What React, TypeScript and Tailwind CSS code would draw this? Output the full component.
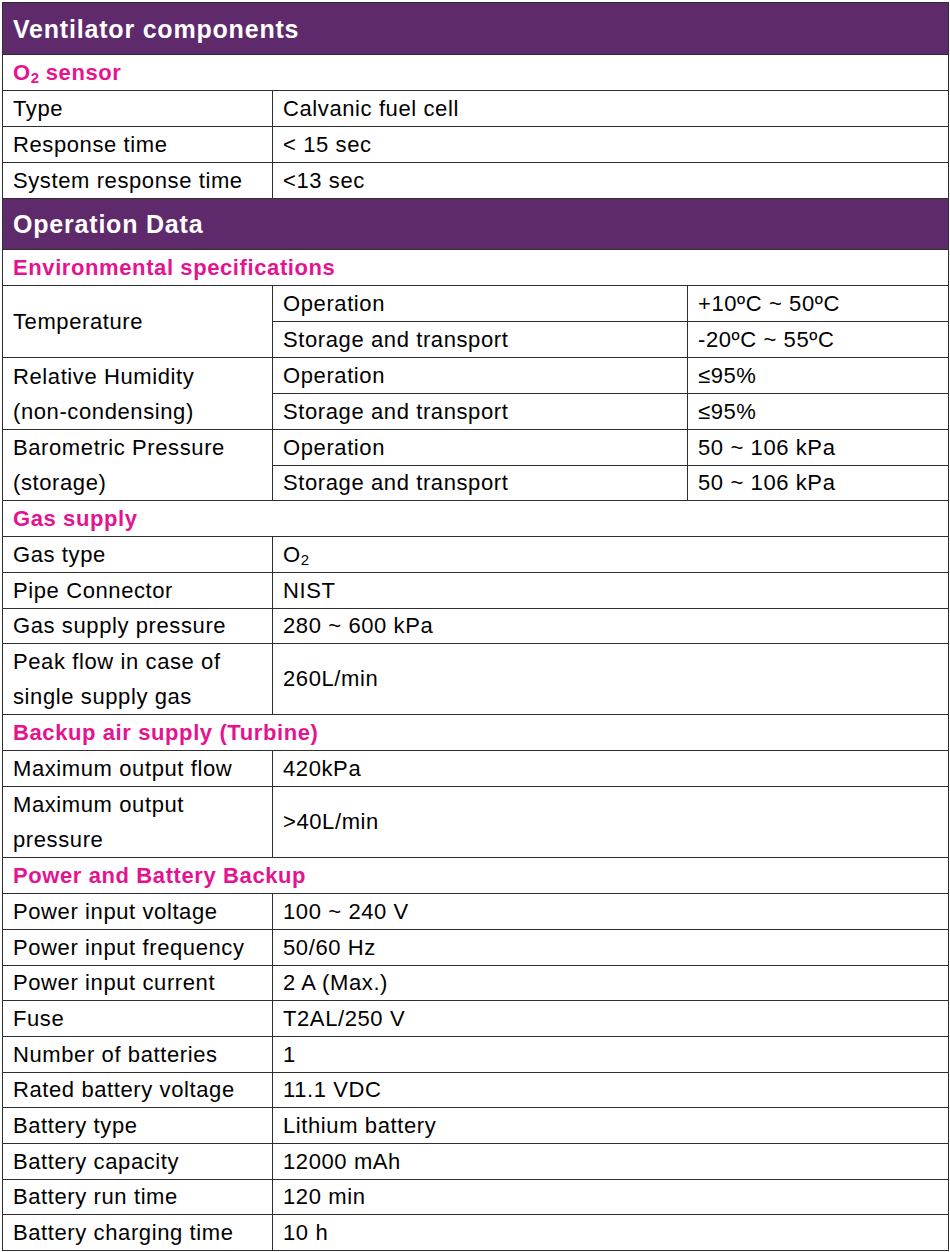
import React from "react";

const F = { fontFamily: '"Liberation Sans", Arial, sans-serif' };

function Sub2() {
  return <span className="text-[15px] leading-none relative top-[3px] tracking-normal">2</span>;
}

const td = "border border-[#2e2e2e] pl-[10px] pr-[6px] py-0 align-middle";

function Header({ children, h }: { children: React.ReactNode; h: string }) {
  return (
    <tr className={h}>
      <td colSpan={3} className={`${td} bg-[#5e2a6c] text-white font-bold text-[25px] tracking-[0.8px]`}>
        {children}
      </td>
    </tr>
  );
}

function Section({ children }: { children: React.ReactNode }) {
  return (
    <tr className="h-[36px]">
      <td colSpan={3} className={`${td} text-[#e5138f] font-bold text-[22px]`}>
        {children}
      </td>
    </tr>
  );
}

function Row2({ a, b, h = "h-[36px]", two }: { a: React.ReactNode; b: React.ReactNode; h?: string; two?: boolean }) {
  return (
    <tr className={h}>
      <td className={two ? `${td} leading-[35px]` : td}>{a}</td>
      <td colSpan={2} className={td}>{b}</td>
    </tr>
  );
}

function Row3({ c2, c3, h = "h-[36px]", first }: { c2: string; c3: string; h?: string; first?: React.ReactNode }) {
  return (
    <tr className={h}>
      {first !== undefined && (
        <td rowSpan={2} className={`${td} leading-[35px]`}>{first}</td>
      )}
      <td className={td}>{c2}</td>
      <td className={td}>{c3}</td>
    </tr>
  );
}

export default function App() {
  return (
    <div className="bg-white w-[950px] h-[1252px] pt-[2px] pl-[2px]" style={F}>
      <table className="border-collapse table-fixed w-[946px] text-[22px] tracking-[0.6px] text-black leading-[30px]">
        <colgroup>
          <col className="w-[270px]" />
          <col className="w-[415px]" />
          <col className="w-[261px]" />
        </colgroup>
        <tbody>
          <Header h="h-[52px]">Ventilator components</Header>
          <Section>O<Sub2 /> sensor</Section>
          <Row2 a="Type" b="Calvanic fuel cell" />
          <Row2 a="Response time" b="< 15 sec" />
          <Row2 a="System response time" b="<13 sec" />
          <Header h="h-[51px]">Operation Data</Header>
          <Section>Environmental specifications</Section>
          <Row3 first="Temperature" c2="Operation" c3="+10ºC ~ 50ºC" />
          <Row3 c2="Storage and transport" c3="-20ºC ~ 55ºC" />
          <Row3 first={<>Relative Humidity<br />(non-condensing)</>} c2="Operation" c3="≤95%" />
          <Row3 c2="Storage and transport" c3="≤95%" />
          <Row3 first={<>Barometric Pressure<br />(storage)</>} c2="Operation" c3="50 ~ 106 kPa" />
          <Row3 c2="Storage and transport" c3="50 ~ 106 kPa" h="h-[35px]" />
          <Section>Gas supply</Section>
          <Row2 a="Gas type" b={<>O<Sub2 /></>} />
          <Row2 a="Pipe Connector" b="NIST" />
          <Row2 a="Gas supply pressure" b="280 ~ 600 kPa" h="h-[35px]" />
          <Row2 two a={<>Peak flow in case of<br />single supply gas</>} b="260L/min" h="h-[71px]" />
          <Section>Backup air supply (Turbine)</Section>
          <Row2 a="Maximum output flow" b="420kPa" />
          <Row2 two a={<>Maximum output<br />pressure</>} b=">40L/min" h="h-[71px]" />
          <Section>Power and Battery Backup</Section>
          <Row2 a="Power input voltage" b="100 ~ 240 V" />
          <Row2 a="Power input frequency" b="50/60 Hz" />
          <Row2 a="Power input current" b="2 A (Max.)" h="h-[35px]" />
          <Row2 a="Fuse" b="T2AL/250 V" />
          <Row2 a="Number of batteries" b="1" />
          <Row2 a="Rated battery voltage" b="11.1 VDC" h="h-[35px]" />
          <Row2 a="Battery type" b="Lithium battery" />
          <Row2 a="Battery capacity" b="12000 mAh" />
          <Row2 a="Battery run time" b="120 min" h="h-[35px]" />
          <Row2 a="Battery charging time" b="10 h" />
        </tbody>
      </table>
    </div>
  );
}
